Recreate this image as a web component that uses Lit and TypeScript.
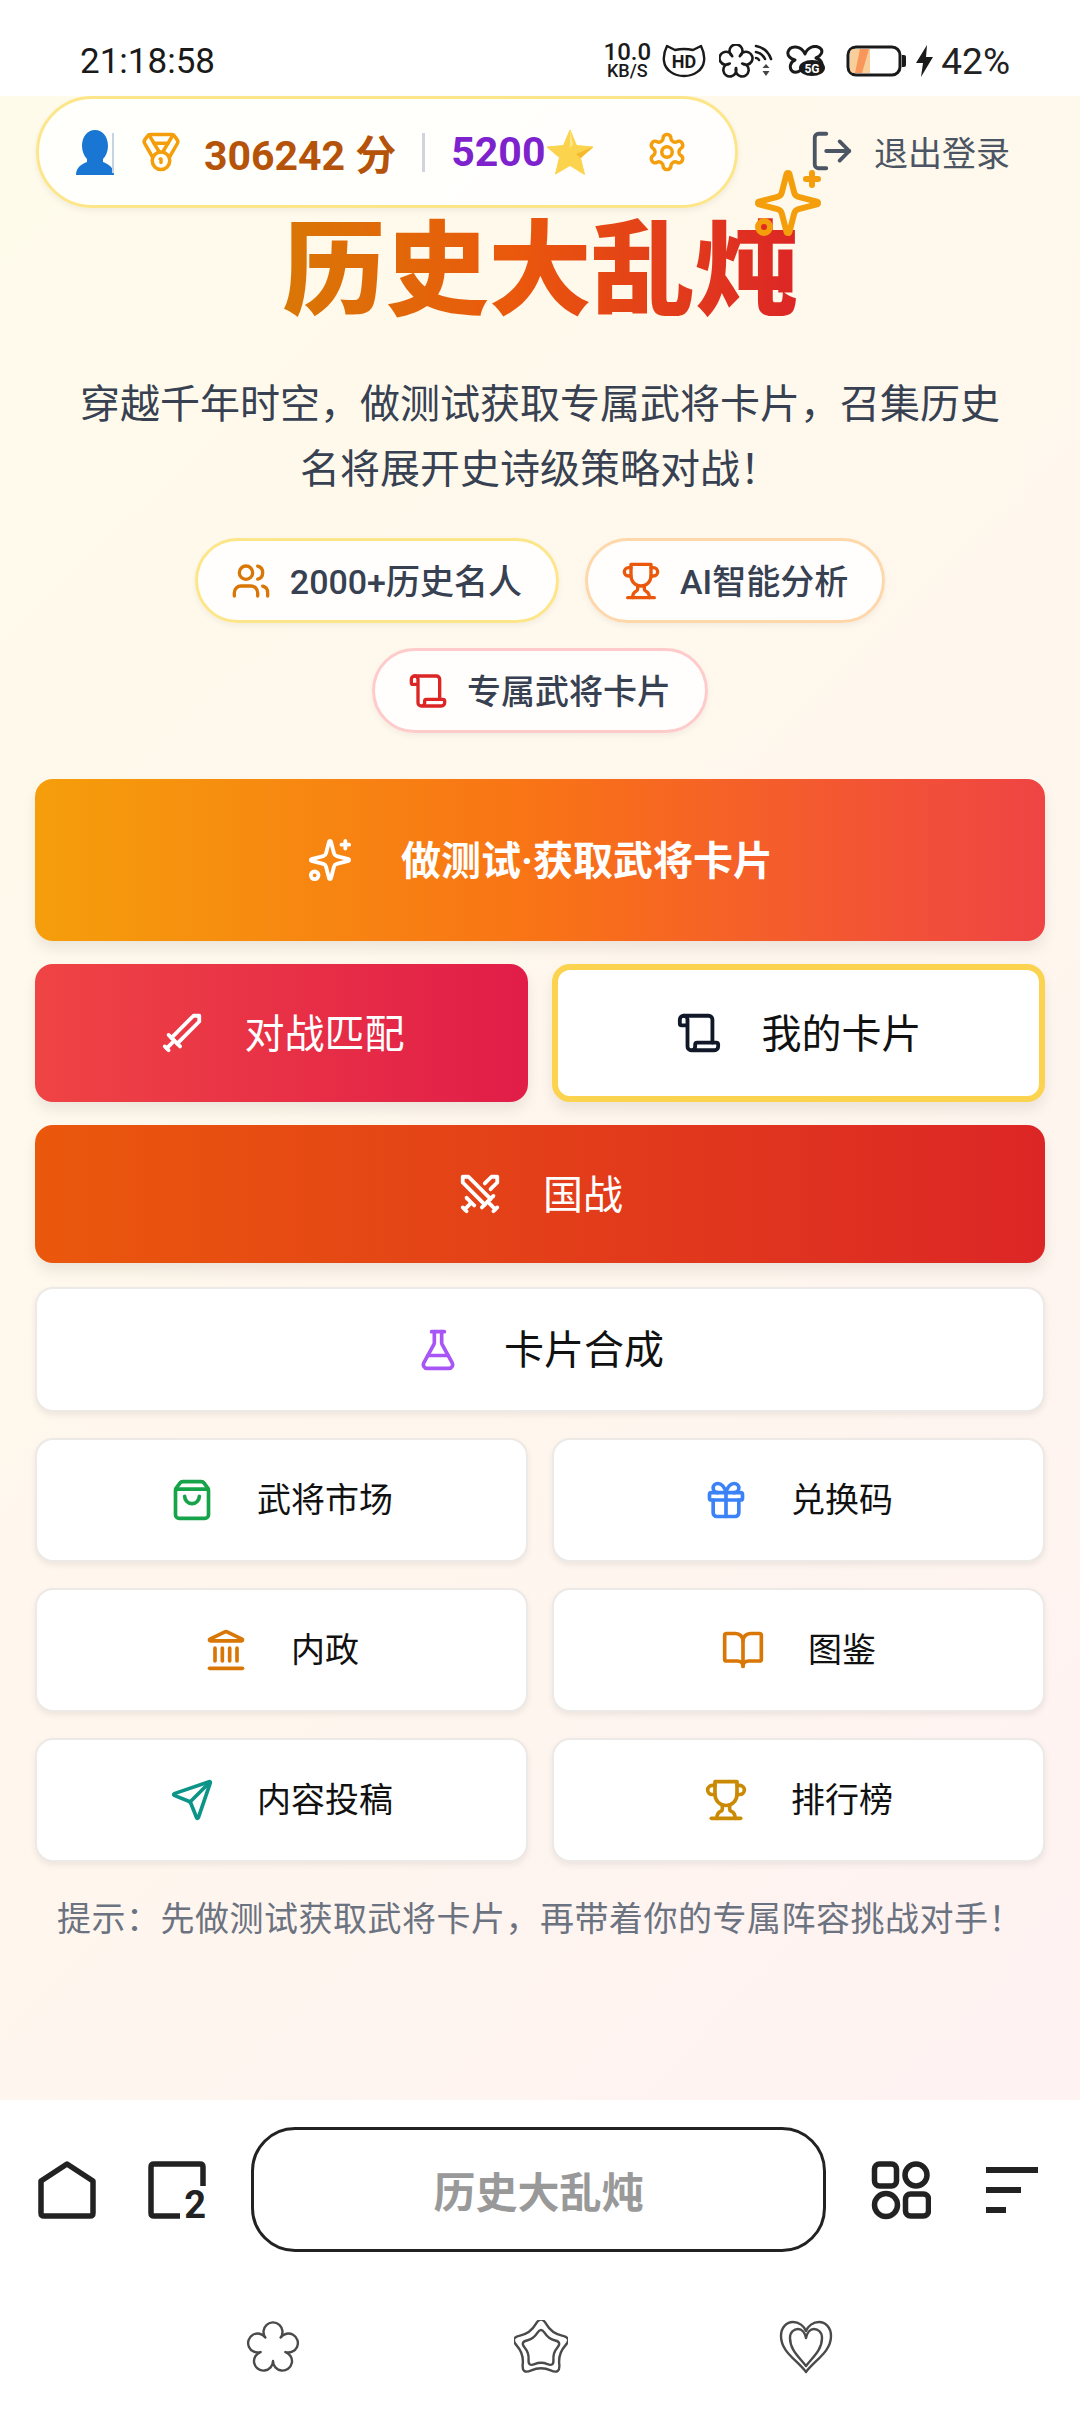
import { LitElement, html, css, svg } from 'lit';
import { customElement } from 'lit/decorators.js';

// lucide-style stroke icons, 24 unit box
const ICONS: Record<string, unknown> = {
  sparkles: svg`<path d="M9.937 15.5A2 2 0 0 0 8.5 14.063l-6.135-1.582a.5.5 0 0 1 0-.962L8.5 9.936A2 2 0 0 0 9.937 8.5l1.582-6.135a.5.5 0 0 1 .963 0L14.063 8.5A2 2 0 0 0 15.5 9.937l6.135 1.581a.5.5 0 0 1 0 .964L15.5 14.063a2 2 0 0 0-1.437 1.437l-1.582 6.135a.5.5 0 0 1-.963 0z"/><path d="M20 2v4"/><path d="M22 4h-4"/><circle cx="4" cy="20" r="2"/>`,
  sword: svg`<path d="m11 19-6-6"/><path d="m5 21-2-2"/><path d="m8 16-4 4"/><path d="M9.5 17.5 21 6V3h-3L6.5 14.5"/>`,
  swords: svg`<polyline points="14.5 17.5 3 6 3 3 6 3 17.5 14.5"/><line x1="13" x2="19" y1="19" y2="13"/><line x1="16" x2="20" y1="16" y2="20"/><line x1="19" x2="21" y1="21" y2="19"/><polyline points="14.5 6.5 18 3 21 3 21 6 17.5 9.5"/><line x1="5" x2="9" y1="14" y2="18"/><line x1="7" x2="4" y1="17" y2="20"/><line x1="3" x2="5" y1="19" y2="21"/>`,
  scroll: svg`<path d="M19 17V5a2 2 0 0 0-2-2H4"/><path d="M8 21h12a2 2 0 0 0 2-2v-1a1 1 0 0 0-1-1H11a1 1 0 0 0-1 1v1a2 2 0 1 1-4 0V5a2 2 0 1 0-4 0v2a1 1 0 0 0 1 1h3"/>`,
  flask: svg`<path d="M14 2v6a2 2 0 0 0 .245.96l5.51 10.08A2 2 0 0 1 18 22H6a2 2 0 0 1-1.755-2.96l5.51-10.08A2 2 0 0 0 10 8V2"/><path d="M6.453 15h11.094"/><path d="M8.5 2h7"/>`,
  bag: svg`<path d="M16 10a4 4 0 0 1-8 0"/><path d="M3.103 6.034h17.794"/><path d="M3.4 5.467a2 2 0 0 0-.4 1.2V20a2 2 0 0 0 2 2h14a2 2 0 0 0 2-2V6.667a2 2 0 0 0-.4-1.2l-2-2.667A2 2 0 0 0 17 2H7a2 2 0 0 0-1.6.8z"/>`,
  gift: svg`<rect x="3" y="8" width="18" height="4" rx="1"/><path d="M12 8v13"/><path d="M19 12v7a2 2 0 0 1-2 2H7a2 2 0 0 1-2-2v-7"/><path d="M7.5 8a2.5 2.5 0 0 1 0-5A4.8 8 0 0 1 12 8a4.8 8 0 0 1 4.5-5 2.5 2.5 0 0 1 0 5"/>`,
  landmark: svg`<path d="M10 18v-7"/><path d="M11.12 2.198a2 2 0 0 1 1.76.006l7.866 3.847c.476.233.31.949-.22.949H3.474c-.53 0-.695-.716-.22-.949z"/><path d="M14 18v-7"/><path d="M18 18v-7"/><path d="M3 22h18"/><path d="M6 18v-7"/>`,
  book: svg`<path d="M12 7v14"/><path d="M3 18a1 1 0 0 1-1-1V4a1 1 0 0 1 1-1h5a4 4 0 0 1 4 4 4 4 0 0 1 4-4h5a1 1 0 0 1 1 1v13a1 1 0 0 1-1 1h-6a3 3 0 0 0-3 3 3 3 0 0 0-3-3z"/>`,
  send: svg`<path d="M14.536 21.686a.5.5 0 0 0 .937-.024l6.5-19a.496.496 0 0 0-.635-.635l-19 6.5a.5.5 0 0 0-.024.937l7.93 3.18a2 2 0 0 1 1.112 1.11z"/><path d="m21.854 2.147-10.94 10.939"/>`,
  trophy: svg`<path d="M6 9H4.5a2.5 2.5 0 0 1 0-5H6"/><path d="M18 9h1.5a2.5 2.5 0 0 0 0-5H18"/><path d="M4 22h16"/><path d="M10 14.66V17c0 .55-.47.98-.97 1.21C7.85 18.75 7 20.24 7 22"/><path d="M14 14.66V17c0 .55.47.98.97 1.21C16.15 18.75 17 20.24 17 22"/><path d="M18 2H6v7a6 6 0 0 0 12 0V2Z"/>`,
  users: svg`<path d="M16 21v-2a4 4 0 0 0-4-4H6a4 4 0 0 0-4 4v2"/><circle cx="9" cy="7" r="4"/><path d="M22 21v-2a4 4 0 0 0-3-3.87"/><path d="M16 3.13a4 4 0 0 1 0 7.75"/>`,
  medal: svg`<path d="M7.21 15 2.66 7.14a2 2 0 0 1 .13-2.2L4.4 2.8A2 2 0 0 1 6 2h12a2 2 0 0 1 1.6.8l1.6 2.14a2 2 0 0 1 .14 2.2L16.79 15"/><path d="M11 12 5.12 2.2"/><path d="m13 12 5.88-9.8"/><path d="M8 7h8"/><circle cx="12" cy="17" r="5"/><path d="M12 18v-2h-.5"/>`,
  settings: svg`<path d="M12.22 2h-.44a2 2 0 0 0-2 2v.18a2 2 0 0 1-1 1.73l-.43.25a2 2 0 0 1-2 0l-.15-.08a2 2 0 0 0-2.73.73l-.22.38a2 2 0 0 0 .73 2.73l.15.1a2 2 0 0 1 1 1.72v.51a2 2 0 0 1-1 1.74l-.15.09a2 2 0 0 0-.73 2.73l.22.38a2 2 0 0 0 2.73.73l.15-.08a2 2 0 0 1 2 0l.43.25a2 2 0 0 1 1 1.73V20a2 2 0 0 0 2 2h.44a2 2 0 0 0 2-2v-.18a2 2 0 0 1 1-1.73l.43-.25a2 2 0 0 1 2 0l.15.08a2 2 0 0 0 2.73-.73l.22-.39a2 2 0 0 0-.73-2.73l-.15-.08a2 2 0 0 1-1-1.74v-.5a2 2 0 0 1 1-1.74l.15-.09a2 2 0 0 0 .73-2.73l-.22-.38a2 2 0 0 0-2.73-.73l-.15.08a2 2 0 0 1-2 0l-.43-.25a2 2 0 0 1-1-1.73V4a2 2 0 0 0-2-2z"/><circle cx="12" cy="12" r="3"/>`,
  logout: svg`<path d="M9 21H5a2 2 0 0 1-2-2V5a2 2 0 0 1 2-2h4"/><polyline points="16 17 21 12 16 7"/><line x1="21" x2="9" y1="12" y2="12"/>`,
};

const icon = (name: string, size: number, color: string, sw = 2) => html`<svg
  class="ic" width=${size} height=${size} viewBox="0 0 24 24" fill="none"
  stroke=${color} stroke-width=${sw} stroke-linecap="round" stroke-linejoin="round">${ICONS[name]}</svg>`;

// five round petals joined at notches, one petal pointing up
function flowerPath(cx: number, cy: number, notch: number, petal: number) {
  const pts: number[][] = [];
  for (let i = 0; i < 5; i++) {
    const a = ((-126 + i * 72) * Math.PI) / 180;
    pts.push([cx + notch * Math.cos(a), cy + notch * Math.sin(a)]);
  }
  let d = `M${pts[0][0].toFixed(2)} ${pts[0][1].toFixed(2)}`;
  for (let i = 1; i <= 5; i++) {
    const p = pts[i % 5];
    d += `A${petal} ${petal} 0 1 1 ${p[0].toFixed(2)} ${p[1].toFixed(2)}`;
  }
  return d + 'z';
}

// soft star: quadratic curves through the midpoints of a 10 point outline
function softStar(cx: number, cy: number, outer: number, inner: number) {
  const pts: number[][] = [];
  for (let i = 0; i < 10; i++) {
    const r = i % 2 ? inner : outer;
    const a = ((-90 + i * 36) * Math.PI) / 180;
    pts.push([cx + r * Math.cos(a), cy + r * Math.sin(a)]);
  }
  const mid = (a: number[], b: number[]) => [(a[0] + b[0]) / 2, (a[1] + b[1]) / 2];
  const s = mid(pts[9], pts[0]);
  let d = `M${s[0].toFixed(2)} ${s[1].toFixed(2)}`;
  for (let i = 0; i < 10; i++) {
    const m = mid(pts[i], pts[(i + 1) % 10]);
    d += `Q${pts[i][0].toFixed(2)} ${pts[i][1].toFixed(2)} ${m[0].toFixed(2)} ${m[1].toFixed(2)}`;
  }
  return d + 'z';
}

const gridItems = [
  { ic: 'bag', color: '#16a34a', label: '武将市场' },
  { ic: 'gift', color: '#3b82f6', label: '兑换码' },
  { ic: 'landmark', color: '#d97706', label: '内政' },
  { ic: 'book', color: '#d97706', label: '图鉴' },
  { ic: 'send', color: '#0d9488', label: '内容投稿' },
  { ic: 'trophy', color: '#ca8a04', label: '排行榜' },
];

@customElement('app-root')
export class AppRoot extends LitElement {
  static styles = css`
    :host {
      display: block;
      width: 1080px;
      height: 2412px;
      overflow: hidden;
      background: #fff;
      font-family: Roboto, 'Noto Sans CJK SC', sans-serif;
      color: #111;
    }
    .ic { display: block; flex: none; }

    .status {
      height: 96px;
      box-sizing: border-box;
      padding: 26px 70px 0 80px;
      display: flex;
      align-items: center;
      justify-content: space-between;
    }
    .time { font-size: 35px; color: #1a1a1a; }
    .sys { display: flex; align-items: center; color: #1a1a1a; }
    .sys svg { display: block; flex: none; }
    .speed { width: 46px; display: flex; flex-direction: column; align-items: center; margin-right: 12px; }
    .speed b { font-size: 24px; line-height: 20px; font-weight: 500; }
    .speed i { font-size: 18px; line-height: 18px; font-style: normal; font-weight: 500; }
    .pct { font-size: 37px; margin-left: 7px; color: #222; }

    main {
      height: 2004px;
      box-sizing: border-box;
      background: linear-gradient(135deg, #fffbeb 0%, #fff7ed 50%, #fef2f2 100%);
      padding: 0 35px;
      display: flex;
      flex-direction: column;
      align-items: stretch;
    }

    .top { display: flex; align-items: center; justify-content: space-between; height: 112px; }
    .score {
      width: 702px;
      height: 112px;
      margin-left: 1px;
      box-sizing: border-box;
      border: 3px solid #fde68a;
      border-radius: 56px;
      background: rgba(255, 255, 255, 0.85);
      box-shadow: 0 3px 6px rgba(0, 0, 0, 0.06);
      display: flex;
      align-items: center;
      padding-left: 36px;
    }
    .pts { font-size: 41px; font-weight: 700; color: #b45309; margin-left: 22px; white-space: pre; }
    .sep { width: 3px; height: 39px; background: #d1d5db; margin: 0 26px 0 26px; }
    .stars { font-size: 41px; font-weight: 700; color: #7e22ce; }
    .logout { display: flex; align-items: center; gap: 19px; font-size: 34px; color: #4b5563; margin-right: 35px; padding-bottom: 2px; }

    .hero { position: relative; display: flex; justify-content: center; margin-top: 8px; }
    h1 {
      margin: 0;
      font-size: 103px;
      line-height: 112px;
      font-weight: 900;
      background: linear-gradient(90deg, #d97706, #ea580c 45%, #dc2626);
      -webkit-background-clip: text;
      background-clip: text;
      color: transparent;
    }
    .spark { position: absolute; left: 717px; top: -49px; }

    .sub {
      margin: 44px 0 0;
      text-align: center;
      font-size: 40px;
      line-height: 65px;
      color: #374151;
    }

    .tags {
      display: flex;
      flex-wrap: wrap;
      justify-content: center;
      gap: 25px 26px;
      margin: 36px 60px 0;
    }
    .tag {
      display: flex;
      align-items: center;
      gap: 19px;
      height: 85px;
      box-sizing: border-box;
      padding: 0 34px 0 33px;
      border-radius: 43px;
      border: 3px solid;
      background: rgba(255, 255, 255, 0.85);
      box-shadow: 0 3px 6px rgba(0, 0, 0, 0.05);
      font-size: 34px;
      font-weight: 500;
      color: #374151;
    }
    .tag span { margin-bottom: 2px; }

    .actions { display: flex; flex-direction: column; gap: 23px; margin-top: 46px; }
    .row { display: grid; grid-template-columns: 1fr 1fr; gap: 24px; }
    .btn {
      box-sizing: border-box;
      display: flex;
      align-items: center;
      justify-content: center;
      gap: 40px;
      border-radius: 18px;
      font-size: 40px;
      color: #fff;
      box-shadow: 0 8px 14px rgba(0, 0, 0, 0.08);
    }
    .btn span, .cell span { margin-bottom: 5px; }
    .b1 { height: 162px; font-weight: 700; gap: 48px; background: linear-gradient(90deg, #f59e0b, #f97316 50%, #ef4444); }
    .b2 { height: 138px; background: linear-gradient(90deg, #ef4444, #e11d48); }
    .b3 { height: 138px; background: #fff; color: #111; border: 6px solid #fbd34f; }
    .b4 { height: 138px; background: linear-gradient(90deg, #ea580c, #dc2626); }
    .b5 {
      height: 125px;
      margin-top: 1px;
      gap: 44px;
      background: #fff;
      color: #111;
      border: 2px solid #ece9e6;
      box-shadow: 0 3px 6px rgba(0, 0, 0, 0.07);
    }
    .cells { display: grid; grid-template-columns: 1fr 1fr; gap: 26px 24px; margin-top: 26px; }
    .cell {
      height: 124px;
      box-sizing: border-box;
      background: #fff;
      border: 2px solid #ece9e6;
      border-radius: 18px;
      display: flex;
      align-items: center;
      justify-content: center;
      gap: 43px;
      font-size: 34px;
      color: #111;
      box-shadow: 0 3px 6px rgba(0, 0, 0, 0.07);
    }
    .hint {
      margin: 35px 0 0;
      text-align: center;
      font-size: 34px;
      line-height: 44px;
      letter-spacing: 0.5px;
      color: #6b7280;
      white-space: nowrap;
    }

    .nav {
      height: 179px;
      display: flex;
      align-items: center;
      justify-content: space-between;
      padding: 0 41px 0 38px;
    }
    .nav-l, .nav-r { display: flex; align-items: center; }
    .nav svg { display: block; }
    .recents { position: relative; width: 58px; height: 58px; margin-left: 52px; }
    .recents span {
      position: absolute;
      right: 0;
      bottom: -1px;
      font-size: 38px;
      line-height: 30px;
      font-weight: 700;
      color: #222;
    }
    .address {
      width: 575px;
      height: 125px;
      box-sizing: border-box;
      border: 3px solid #222;
      border-radius: 44px;
      display: flex;
      align-items: center;
      justify-content: center;
      font-size: 42px;
      font-weight: 700;
      color: #999;
    }
    .keys {
      height: 133px;
      box-sizing: border-box;
      display: flex;
      padding: 41px 0 0 246px;
      gap: 214px;
    }
    .keys svg { display: block; }
    .keys .heart { margin-left: -3px; }
  `;

  render() {
    return html`
      <div class="status">
        <span class="time">21:18:58</span>
        <div class="sys">
          <div class="speed"><b>10.0</b><i>KB/S</i></div>
          <svg width="44" height="34" viewBox="0 0 44 34" fill="none" stroke="#1a1a1a" stroke-width="2.4" stroke-linejoin="round">
            <path d="M5 2l8 4q9-2 18 0l8-4q4 8 3 15c-1 9-10 15-20 15S3 26 2 17q-1-7 3-15z"/>
            <text x="22" y="24" font-size="18" font-weight="700" text-anchor="middle" fill="#1a1a1a" stroke="none" font-family="Roboto">HD</text>
          </svg>
          <svg style="margin-left:13px" width="54" height="34" viewBox="0 0 54 34" fill="none" stroke="#1a1a1a" stroke-width="2.6" stroke-linejoin="round" stroke-linecap="round">
            <path d=${flowerPath(17, 17.5, 6.5, 6.5)}/>
            <path d="M37 2q11 2 15 13M37 8q6 1 9 7M37 14q2 0 3 2"/>
            <path d="M47 20l3.500 4h-7zM47 32l3.500-5h-7z" fill="#444" stroke="none"/>
          </svg>
          <svg style="margin-left:13px" width="40" height="32" viewBox="0 0 40 32" fill="none" stroke="#1a1a1a" stroke-width="3" stroke-linejoin="round">
            <path d="M19 9C15 0 4 0 2 7c-1 4 3 7 7 8-5 2-6 8-3 11 4 3 9 0 12-4 4 5 12 8 16 3 4-5 2-10-4-12 5-2 8-7 4-10-4-3-12-2-15 6z"/>
            <ellipse cx="26" cy="23" rx="13" ry="8" fill="#1a1a1a" stroke="none"/>
            <text x="26" y="28" font-size="12" font-weight="700" text-anchor="middle" fill="#fff" stroke="none" font-family="Roboto">5G</text>
          </svg>
          <svg style="margin-left:20px" width="62" height="32" viewBox="0 0 62 32">
            <rect x="2" y="2" width="52" height="28" rx="8" fill="#fff" stroke="#1a1a1a" stroke-width="3"/>
            <path d="M8 4h16v24H8q-4 0-4-4V8q0-4 4-4z" fill="#f8cf9a"/>
            <path d="M14 4h9l-7 24H9z" fill="#f9965a"/>
            <path d="M56 10h2q2 0 2 2v8q0 2-2 2h-2z" fill="#1a1a1a"/>
          </svg>
          <svg style="margin-left:7px" width="19" height="32" viewBox="0 0 19 32"><path d="M12 0 1 18h7l-2 14 12-20h-7z" fill="#1a1a1a"/></svg>
          <span class="pct">42%</span>
        </div>
      </div>

      <main>
        <div class="top">
          <div class="score">
            <svg width="44" height="46" viewBox="0 0 44 46">
              <path d="M20 1c8 0 13 7 13 16 0 5-2 10-5 13v3c5 2 11 5 11 13H1c0-8 6-11 11-13v-3c-3-3-5-8-5-13C7 8 12 1 20 1z" fill="#1976d2"/>
              <path d="M38 4v40" stroke="#c5d3e4" stroke-width="2"/>
            </svg>
            <span style="margin-left:21px">${icon('medal', 42, '#f59e0b')}</span>
            <span class="pts">306242 分</span>
            <span class="sep"></span>
            <span class="stars">5200</span>
            <svg style="margin-left:1px" width="48" height="46" viewBox="0 0 48 46">
              <path d="M24 1l6.500 15.500 16.500 1.500-12.500 11 4 16.500L24 36.500 9.500 45l4-16.500L1 18l16.500-1.500z" fill="#fcd34d" stroke="#fcd34d" stroke-linejoin="round"/>
              <path d="M24 1l3 14-3 4z" fill="#fde68a"/>
              <path d="M47 18 34.500 29 30 25z" fill="#f5b82e"/>
            </svg>
            <span style="margin-left:52px">${icon('settings', 42, '#f59e0b')}</span>
          </div>
          <div class="logout">${icon('logout', 46, '#4b5563')}<span>退出登录</span></div>
        </div>

        <div class="hero">
          <h1>历史大乱炖</h1>
          <span class="spark">${icon('sparkles', 72, '#f59e0b')}</span>
        </div>

        <p class="sub">穿越千年时空\uFF0C做测试获取专属武将卡片\uFF0C召集历史<br />名将展开史诗级策略对战\uFF01</p>

        <div class="tags">
          <div class="tag" style="border-color:#fde68a">${icon('users', 40, '#d97706')}<span>2000+历史名人</span></div>
          <div class="tag" style="border-color:#fed7aa">${icon('trophy', 40, '#ea580c')}<span>AI智能分析</span></div>
          <div class="tag" style="border-color:#fecaca">${icon('scroll', 40, '#dc2626')}<span>专属武将卡片</span></div>
        </div>

        <div class="actions">
          <div class="btn b1">${icon('sparkles', 46, '#fff')}<span>做测试·获取武将卡片</span></div>
          <div class="row">
            <div class="btn b2">${icon('sword', 46, '#fff')}<span>对战匹配</span></div>
            <div class="btn b3">${icon('scroll', 46, '#111827')}<span>我的卡片</span></div>
          </div>
          <div class="btn b4">${icon('swords', 46, '#fff')}<span>国战</span></div>
          <div class="btn b5">${icon('flask', 44, '#a855f7')}<span>卡片合成</span></div>
        </div>

        <div class="cells">
          ${gridItems.map((g) => html`<div class="cell">${icon(g.ic, 44, g.color)}<span>${g.label}</span></div>`)}
        </div>

        <p class="hint">提示\uFF1A先做测试获取武将卡片\uFF0C再带着你的专属阵容挑战对手\uFF01</p>
      </main>

      <div class="nav">
        <div class="nav-l">
          <svg width="58" height="58" viewBox="0 0 58 58" fill="none" stroke="#222" stroke-width="5.5" stroke-linejoin="round">
            <path d="M3 20 29 3l26 17v32q0 3-3 3H6q-3 0-3-3z"/>
          </svg>
          <div class="recents">
            <svg width="58" height="58" viewBox="0 0 58 58" fill="none" stroke="#222" stroke-width="5.5">
              <path d="M32 55H6q-3 0-3-3V6q0-3 3-3h46q3 0 3 3v19"/>
            </svg>
            <span>2</span>
          </div>
        </div>
        <div class="address">历史大乱炖</div>
        <div class="nav-r">
          <svg width="60" height="60" viewBox="0 0 60 60" fill="none" stroke="#222" stroke-width="5.500">
            <rect x="3.500" y="4" width="22" height="22" rx="5"/><circle cx="45" cy="15" r="11"/>
            <circle cx="15" cy="45" r="11.500"/><rect x="34.500" y="34" width="23" height="22" rx="5"/>
          </svg>
          <svg style="margin-left:55px" width="53" height="46" viewBox="0 0 53 46" fill="#222">
            <rect width="52" height="6"/><rect y="20" width="35" height="6"/><rect y="40" width="20" height="6"/>
          </svg>
        </div>
      </div>

      <div class="keys">
        <svg width="54" height="54" viewBox="0 0 54 54" fill="none" stroke="#4a4a4a" stroke-width="2.4" stroke-linejoin="round">
          <path d=${flowerPath(27, 28, 13, 9.5)}/>
        </svg>
        <svg width="54" height="54" viewBox="0 0 54 54" fill="none" stroke="#4a4a4a" stroke-width="2.4" stroke-linejoin="round">
          <path d=${softStar(27, 28, 33, 18)}/>
          <path d=${softStar(27, 29, 22, 12.5)}/>
        </svg>
        <svg class="heart" width="54" height="54" viewBox="0 0 54 54" fill="none" stroke="#4a4a4a" stroke-width="2.4" stroke-linejoin="round">
          <path d="M27 52C18 40 2 32 2 16 2 7 8 2 14 2c6 0 11 4 13 9 2-5 7-9 13-9 6 0 12 5 12 14 0 16-16 24-25 36z"/>
          <path d="M27 46C20 37 11 30 11 18c0-6 4-9 8-9 4 0 7 4 8 9 1-5 4-9 8-9 4 0 8 3 8 9 0 12-9 19-16 28z"/>
        </svg>
      </div>
    `;
  }
}
